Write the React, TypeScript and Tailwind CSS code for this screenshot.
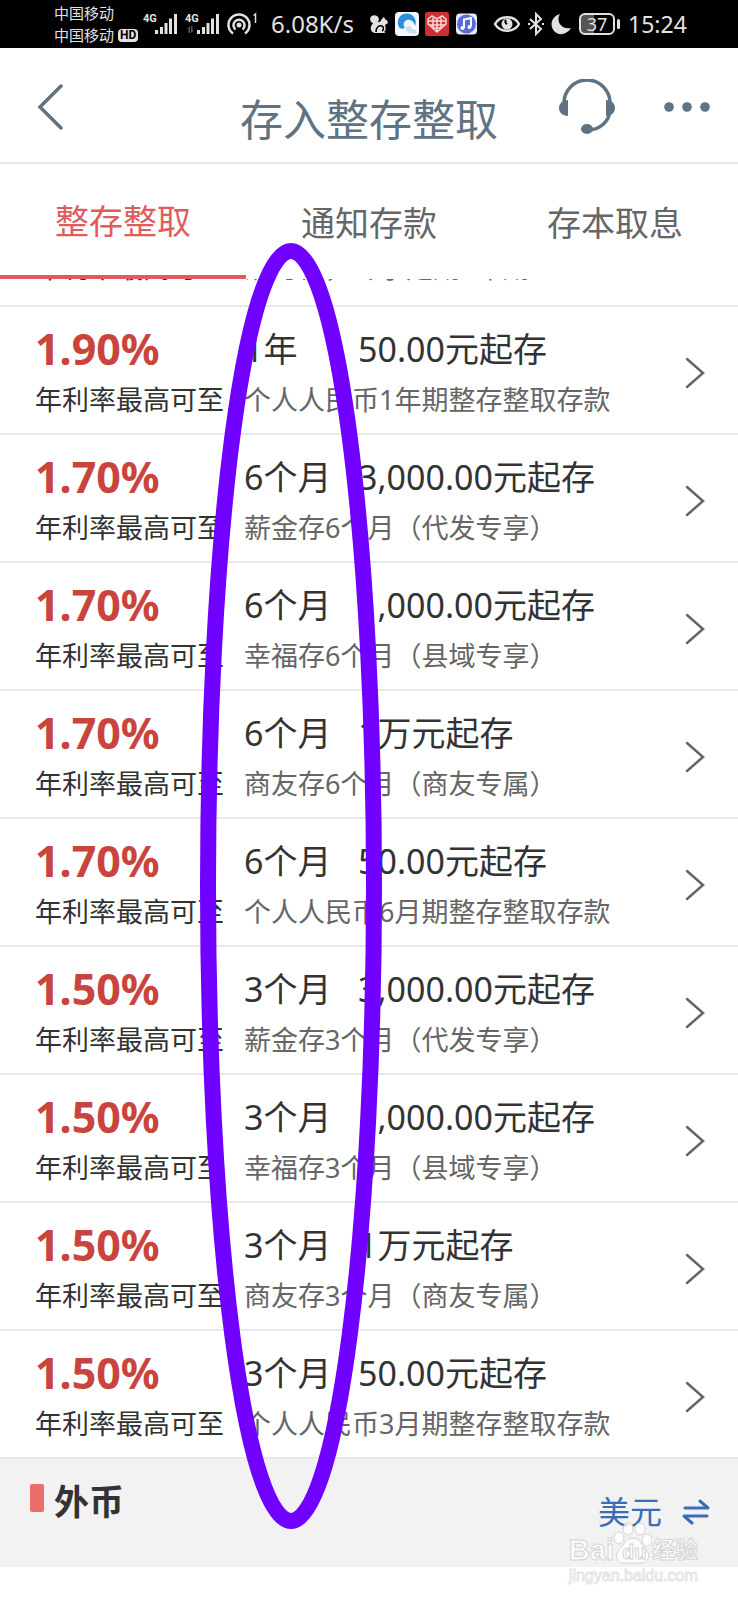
const products = [
  { rate: "1.90%", term: "1年", amount: "50.00元起存", name: "个人人民币1年期整存整取存款" },
  { rate: "1.70%", term: "6个月", amount: "3,000.00元起存", name: "薪金存6个月（代发专享）" },
  { rate: "1.70%", term: "6个月", amount: "1,000.00元起存", name: "幸福存6个月（县域专享）" },
  { rate: "1.70%", term: "6个月", amount: "1万元起存", name: "商友存6个月（商友专属）" },
  { rate: "1.70%", term: "6个月", amount: "50.00元起存", name: "个人人民币6月期整存整取存款" },
  { rate: "1.50%", term: "3个月", amount: "3,000.00元起存", name: "薪金存3个月（代发专享）" },
  { rate: "1.50%", term: "3个月", amount: "1,000.00元起存", name: "幸福存3个月（县域专享）" },
  { rate: "1.50%", term: "3个月", amount: "1万元起存", name: "商友存3个月（商友专属）" },
  { rate: "1.50%", term: "3个月", amount: "50.00元起存", name: "个人人民币3月期整存整取存款" },
];

const tabs = ["整存整取", "通知存款", "存本取息"];

const Signal = ({ data = false }: { data?: boolean }) => (
  <svg viewBox="0 0 36 24" className="h-6 w-9 shrink-0" fill="#e2e2e2">
    <text x="0" y="10" fontSize="11" fontWeight="700" fontFamily="Roboto" fill="#e2e2e2">
      4G
    </text>
    {data && <path d="M2 17l3-3v7h-1.500v-4zM6 14h1.500v4H9l-3 3z" fill="#555" />}
    <path d="M12 18h3v4h-3zM17 15h3v7h-3zM21.500 11h3v11h-3zM26 6.500h3V22h-3zM31 2h3v20h-3z" />
  </svg>
);

const StatusBar = () => (
  <div className="flex h-12 items-center bg-black pl-[54px] text-[#e2e2e2]">
    <div className="flex w-[89px] flex-col text-[15px] leading-[22px]">
      <span>中国移动</span>
      <span className="flex items-center gap-1">
        中国移动
        <span className="flex h-[13px] items-center rounded bg-[#e2e2e2] px-0.5 font-[Roboto] text-[12px] font-bold text-black">
          HD
        </span>
      </span>
    </div>
    <div className="flex items-center gap-1.5">
      <Signal />
      <Signal data />
      <svg viewBox="0 0 32 24" className="h-6 w-8" fill="none" stroke="#e2e2e2" strokeWidth="2.500">
        <circle cx="12" cy="13" r="2.500" fill="#e2e2e2" stroke="none" />
        <path d="M8.500 17.500a5.500 5.500 0 1 1 7 0M6 21.500a10.500 10.500 0 1 1 12 0" />
        <path d="M26.500 3.500l2-1.500v9" strokeWidth="1.500" />
      </svg>
    </div>
    <span className="ml-3 w-[98px] text-[24px]">6.08K/s</span>
    <div className="flex items-center gap-1.5">
      <svg viewBox="0 0 20 20" className="size-5" fill="#e2e2e2">
        <path d="M2 8C-1 3 4 0 8 2c3 2 2 5 0 7-2 1-3 3-3 4 0-3 3-5 6-5 1-2 2-4 4-5l1 2c2 1 3 3 3 4l-3 2c1 3 1 6-1 7l2 1H6c-3 0-5-3-4-6 0-2 2-3 2-4z" />
        <path d="M7 18c0-5 3-7 6-6 2 1 2 4 0 5" stroke="#000" fill="none" strokeWidth="1.500" />
      </svg>
      <svg viewBox="0 0 24 24" className="size-6">
        <rect width="24" height="24" rx="4" fill="#f4f8fc" />
        <path d="M4 15a9 9 0 1 1 16-1c-1-5-5-7-8-6-4 1-4 6-2 8-3 1-5 1-6-1z" fill="#2b8fe0" />
        <path d="M11 17c0-4 6-4 6 0 4 0 5 3 4 5l-5-1c-3 0-5-1-5-4z" fill="#c9dff0" />
      </svg>
      <svg viewBox="0 0 24 24" className="size-6">
        <rect width="24" height="24" rx="2" fill="#cf2e33" />
        <path
          d="M12 20L3 12V7l4-3 5 3 5-3 4 3v5zM3 9h18M4 13h16M8 16h8M8 4v12M16 4v12M12 7v13"
          fill="none"
          stroke="#f8d9d9"
          strokeWidth="1.500"
        />
      </svg>
      <svg viewBox="0 0 24 24" className="size-6">
        <rect x="1" y="1.500" width="21" height="21" rx="4" fill="#e9eaf7" />
        <circle cx="11.500" cy="12" r="9.500" fill="#5a6bd8" />
        <path d="M9 16V7.500l7-1.500v8.500" fill="none" stroke="#fff" strokeWidth="2" />
        <circle cx="7.500" cy="16" r="2" fill="#fff" />
        <circle cx="14.500" cy="15" r="2" fill="#fff" />
      </svg>
    </div>
    <div className="ml-3.5 flex items-center gap-1.5">
      <svg viewBox="0 0 28 20" className="h-5 w-7" fill="none" stroke="#e2e2e2" strokeWidth="2.500">
        <path d="M2 10C7 1 21 1 26 10 21 19 7 19 2 10z" />
        <circle cx="14" cy="10" r="5.500" fill="#e2e2e2" stroke="none" />
        <path d="M14 10c-2-1-2-3-1-4" stroke="#000" strokeWidth="2" />
      </svg>
      <svg viewBox="0 0 18 24" className="h-6 w-[18px]" fill="none" stroke="#e2e2e2" strokeWidth="2">
        <path d="M3 7l11 10-5 5V2l5 5L3 17" />
        <path d="M1 12h2M15 12h2" />
      </svg>
      <svg viewBox="0 0 20 22" className="h-[22px] w-5" fill="#e2e2e2">
        <path d="M9 1C5 7 9 17 20 15 16 22 7 23 3 18-2 12 1 3 9 1z" />
      </svg>
    </div>
    <div className="ml-2 flex items-center gap-0.5">
      <span className="flex h-[22px] w-9 items-center justify-center rounded-md border-2 border-[#e2e2e2] bg-linear-to-r from-[#555] from-40% to-black to-40% text-[18px] leading-none">
        37
      </span>
      <span className="h-2.5 w-[3px] rounded bg-[#e2e2e2]" />
    </div>
    <span className="ml-2 text-[23px]">15:24</span>
  </div>
);

const Header = () => (
  <header className="grid h-[116px] grid-cols-[1fr_auto_1fr] items-center border-b-2 border-[#e6e6e6] text-[#5f7382]">
    <button aria-label="返回" className="pt-1 pl-9">
      <svg viewBox="0 0 28 46" className="h-[46px] w-7" fill="none" stroke="currentColor" strokeWidth="3.500" strokeLinecap="round">
        <path d="M25 2L4 23l21 21" />
      </svg>
    </button>
    <h1 className="pt-[30px] text-[43px] leading-[60px]">存入整存整取</h1>
    <div className="flex items-center justify-end gap-12 pt-1 pr-7">
      <button aria-label="客服">
        <svg viewBox="0 0 58 56" className="h-14 w-[58px]" fill="none" stroke="currentColor" strokeWidth="3.500">
          <path d="M6 24a23 23 0 0 1 46 0M52 30c0 12-10 21-22 21" />
          <path d="M10 21v16C-2 37-2 21 10 21zM48 21v16c12 0 12-16 0-16z" fill="currentColor" stroke="none" />
          <ellipse cx="29" cy="50" rx="6" ry="5" fill="currentColor" stroke="none" />
        </svg>
      </button>
      <button aria-label="更多">
        <svg viewBox="0 0 46 10" className="h-2.5 w-[46px]" fill="currentColor">
          <circle cx="5" cy="5" r="4.800" />
          <circle cx="23" cy="5" r="4.800" />
          <circle cx="41" cy="5" r="4.800" />
        </svg>
      </button>
    </div>
  </header>
);

const Tabs = () => (
  <nav className="grid h-[115px] grid-cols-3">
    {tabs.map((tab, i) => (
      <button
        key={tab}
        className={
          i === 0
            ? "border-b-4 border-[#e05c5c] pt-1 text-[34px] text-[#e05c5c]"
            : "border-b-4 border-transparent pt-2 text-[34px] text-[#666]"
        }
      >
        {tab}
      </button>
    ))}
  </nav>
);

const Row = ({ rate, term, amount, name }: (typeof products)[number]) => (
  <a href="#" className="flex h-32 items-start border-b-2 border-[#e8e8e8] pt-[18px] pr-[33px] pl-[35px] whitespace-nowrap">
    <div className="w-[209px]">
      <div className="text-[43px] leading-12 font-bold text-[#c8443c]">{rate}</div>
      <div className="mt-1.5 text-[27px] leading-[42px] text-[#333]">年利率最高可至</div>
    </div>
    <div className="flex-1">
      <div className="flex text-[34px] leading-12 text-[#333]">
        <span className="w-[114px]">{term}</span>
        <span>{amount}</span>
      </div>
      <div className="mt-1.5 text-[27px] leading-[42px] text-[#666]">{name}</div>
    </div>
    <svg viewBox="0 0 20 32" className="mt-8 h-8 w-5" fill="none" stroke="#666" strokeWidth="2.500" strokeLinecap="round">
      <path d="M2 2l16 14L2 30" />
    </svg>
  </a>
);

const Watermark = () => (
  <div className="absolute right-10 bottom-3 font-['Liberation_Sans','Noto_Sans_CJK_SC',sans-serif] text-white/80">
    <div className="flex items-end leading-7 font-bold [-webkit-text-stroke:1px_#d4d4d4]">
      <span className="text-[29px]">Bai</span>
      <svg viewBox="0 0 38 42" className="h-[42px] w-[38px]" fill="#fff" fillOpacity="0.8" stroke="#d4d4d4">
        <ellipse cx="5" cy="16" rx="5" ry="6" />
        <ellipse cx="14" cy="7" rx="5" ry="6" />
        <ellipse cx="26" cy="7" rx="5" ry="6" />
        <ellipse cx="33" cy="18" rx="5" ry="6" />
        <path d="M19 16c8 0 8 8 14 13 4 5 1 12-6 12H10C3 41 0 34 5 28c5-4 6-12 14-12z" />
        <text x="8" y="37" fontSize="20" fontWeight="700">
          du
        </text>
      </svg>
      <span className="text-[23px]">经验</span>
    </div>
    <div className="text-[16px] leading-6 [-webkit-text-stroke:1px_#e4e4e4]">jingyan.baidu.com</div>
  </div>
);

export default function App() {
  return (
    <div className="relative min-h-screen overflow-hidden bg-white font-['Noto_Sans','Noto_Sans_CJK_SC',sans-serif]">
      <StatusBar />
      <Header />
      <Tabs />
      <main>
        {/* Row scrolled mostly under the tabs */}
        <div className="flex h-7 items-end overflow-hidden border-b-2 border-[#e8e8e8] pb-[17px] pl-[35px] text-[27px] leading-10 whitespace-nowrap">
          <span className="w-[209px] text-[#333]">年利率最高可至</span>
          <span className="text-[#666]">活力存，专享定期1年期</span>
        </div>
        {products.map((p) => (
          <Row key={p.name} {...p} />
        ))}
        <section className="flex h-[108px] items-start justify-between bg-[#f2f2f2] pr-7 pl-[30px]">
          <h2 className="flex items-center gap-2.5 pt-[18px] text-[35px] leading-[50px] font-bold text-[#333]">
            <span className="mb-2 h-7 w-3.5 rounded-xs bg-[#ec6e6a]" />
            外币
          </h2>
          <button className="flex items-center gap-5 pt-7 text-[32px] leading-[50px] text-[#3a6db5]">
            美元
            <svg viewBox="0 0 28 26" className="h-[26px] w-7" fill="none" stroke="currentColor" strokeWidth="3" strokeLinecap="round" strokeLinejoin="round">
              <path d="M3 9h23l-8-7M25 17H2l8 7" />
            </svg>
          </button>
        </section>
      </main>
      <svg viewBox="0 0 182 1286" className="pointer-events-none absolute top-[243px] left-[200px] h-[1286px] w-[182px]" fill="none">
        <ellipse cx="91" cy="643" rx="83" ry="635" stroke="#7000ff" strokeWidth="16" />
      </svg>
      <Watermark />
    </div>
  );
}
